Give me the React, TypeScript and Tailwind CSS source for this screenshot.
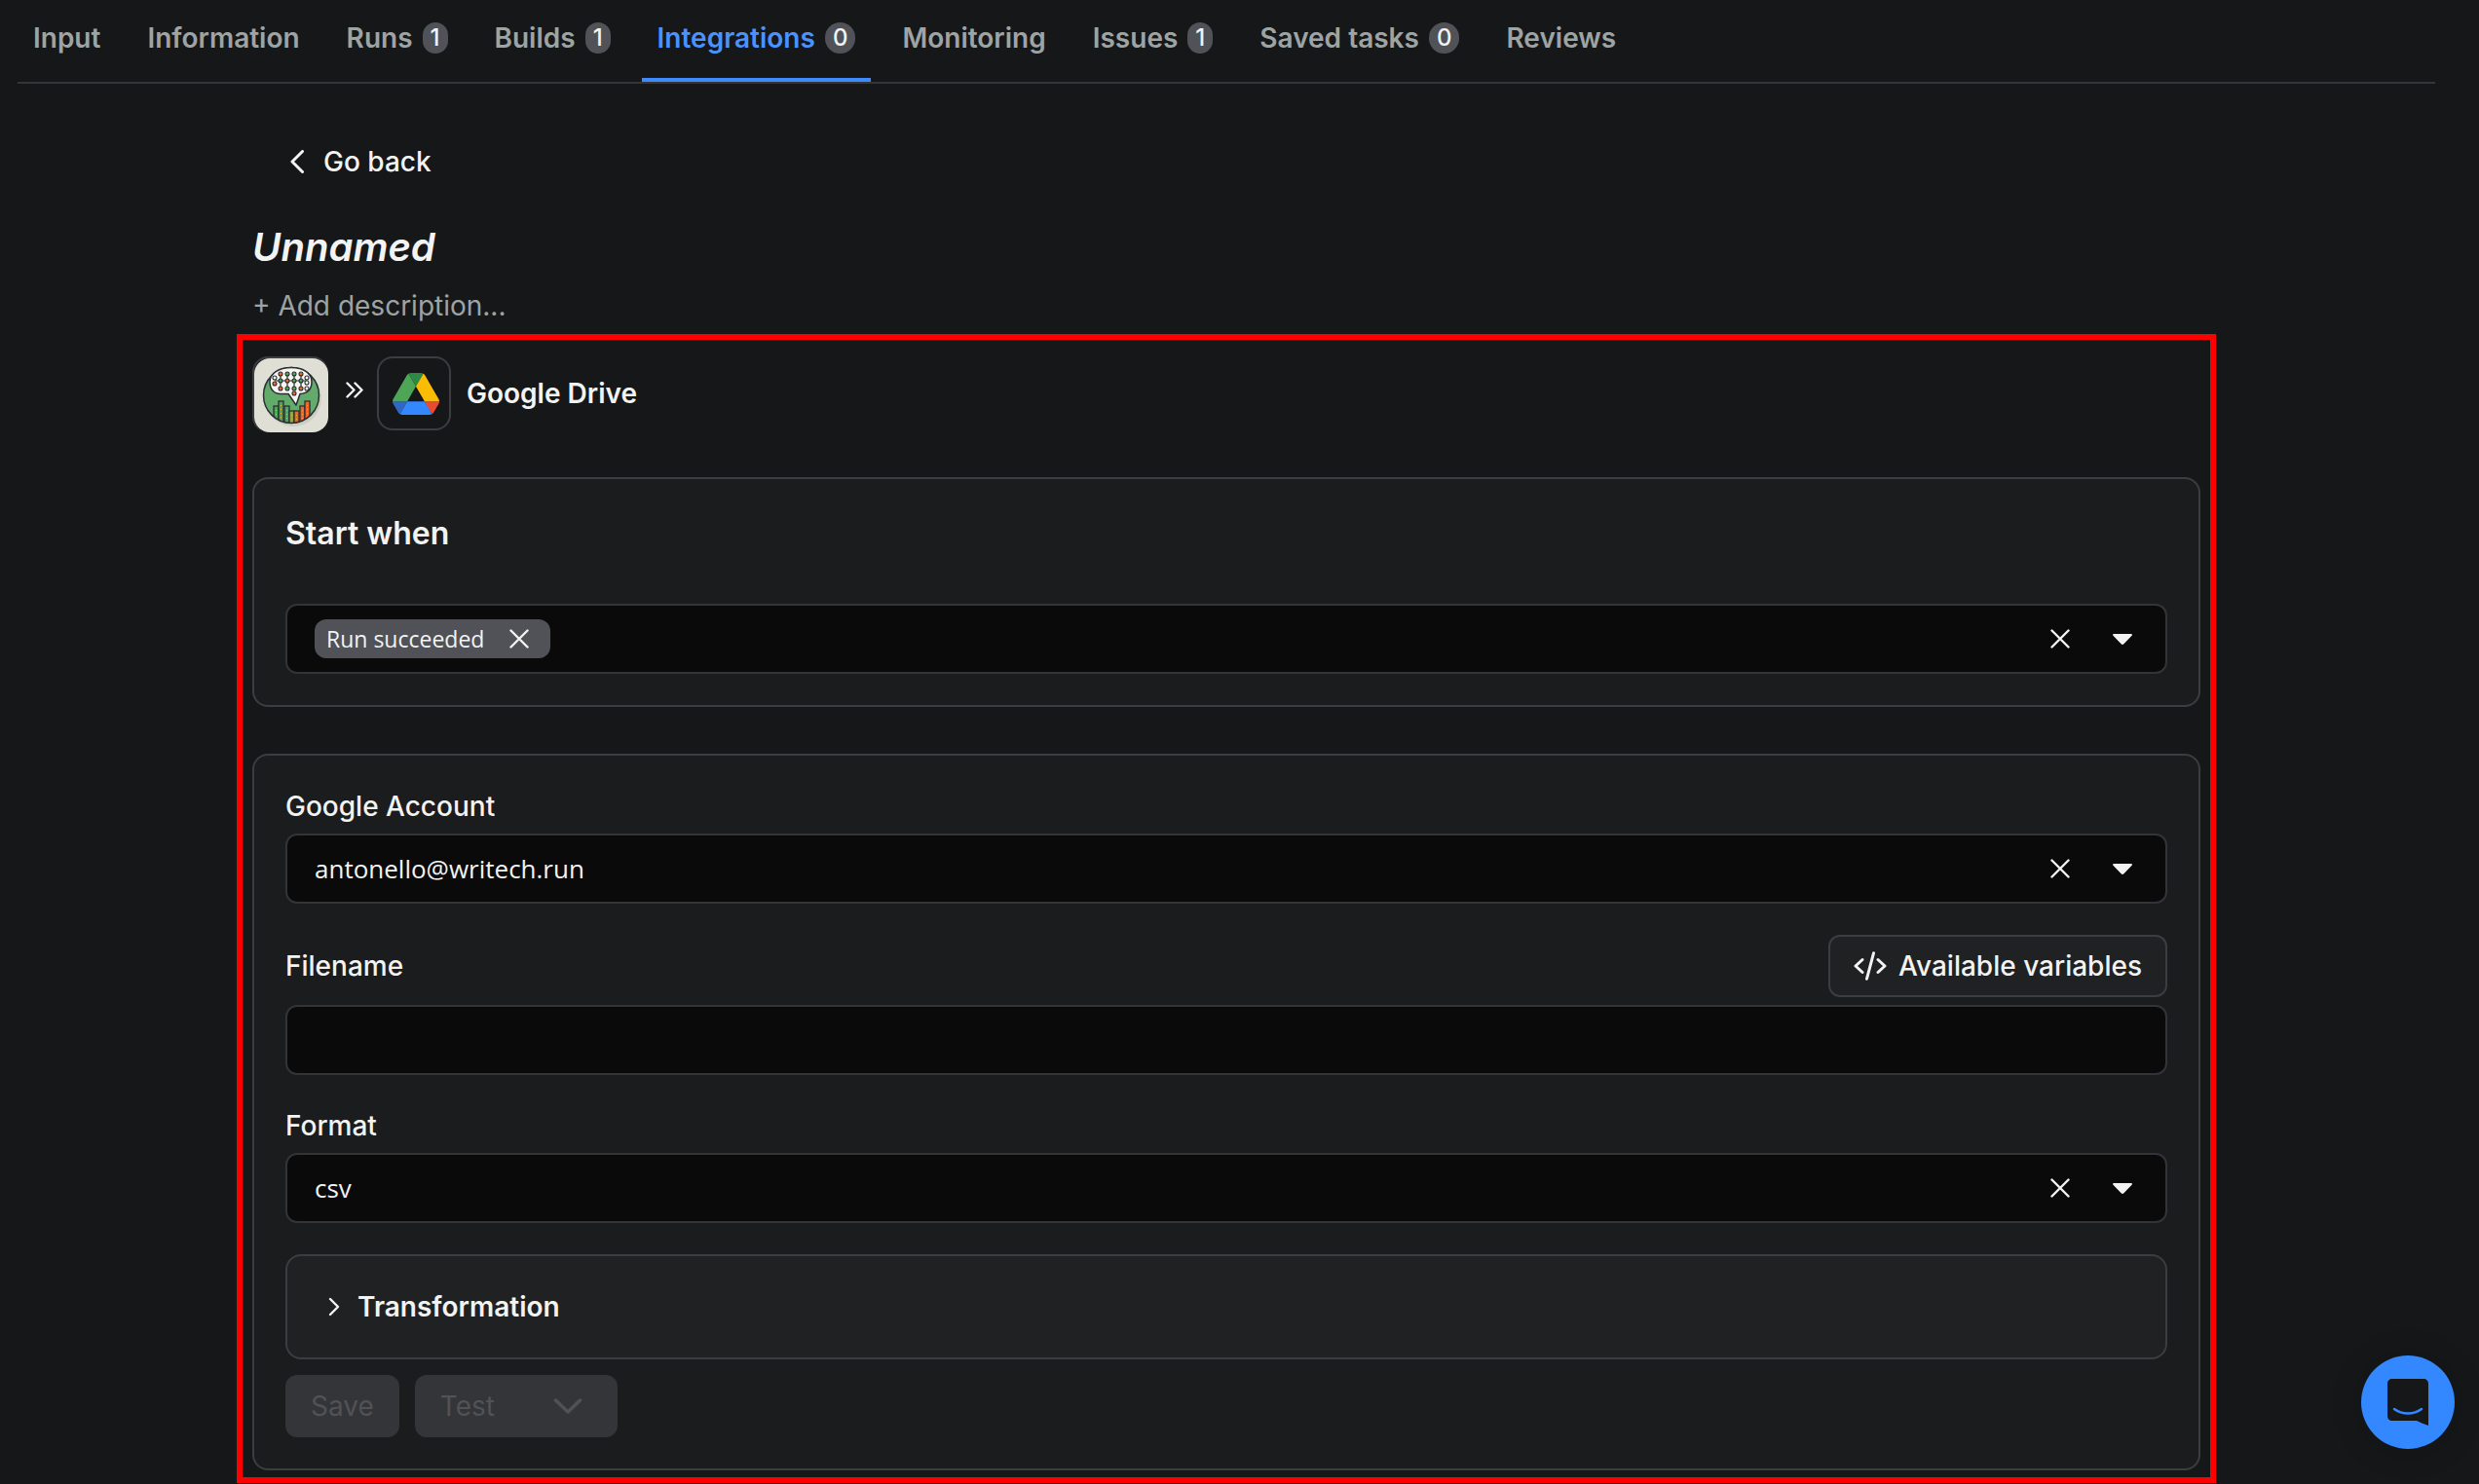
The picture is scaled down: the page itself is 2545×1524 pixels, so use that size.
import React from "react";

type Tab = { label: string; count?: number; active?: boolean };

const tabs: Tab[] = [
  { label: "Input" },
  { label: "Information" },
  { label: "Runs", count: 1 },
  { label: "Builds", count: 1 },
  { label: "Integrations", count: 0, active: true },
  { label: "Monitoring" },
  { label: "Issues", count: 1 },
  { label: "Saved tasks", count: 0 },
  { label: "Reviews" },
];

function Cross() {
  return (
    <svg className="size-5" viewBox="0 0 20 20" fill="none" stroke="currentColor" strokeWidth="2.4" strokeLinecap="round" aria-hidden="true">
      <path d="M1.5 1.5 18.5 18.5M18.5 1.5 1.5 18.5" />
    </svg>
  );
}

function Caret() {
  return (
    <svg className="h-[11px] w-5" viewBox="0 0 20 11" fill="currentColor" aria-hidden="true">
      <path d="M1.2 0h17.6c1 0 1.5 1 .8 1.7l-8.2 8.6c-.8.8-2 .8-2.8 0L.4 1.7C-.3 1 .2 0 1.2 0Z" />
    </svg>
  );
}

function AppLogo() {
  const nodes: [number, number, string][] = [
    [21, 20, "#fff"], [27, 16, "#f26522"], [34, 16, "#4fa45b"], [41, 16, "#4fa45b"], [48, 16, "#f26522"], [54, 20, "#fff"],
    [21, 26, "#f26522"], [27, 23, "#4fa45b"], [34, 23, "#f26522"], [41, 23, "#4fa45b"], [48, 23, "#4fa45b"], [54, 25, "#fff"],
    [27, 31, "#f26522"], [34, 31, "#4fa45b"], [41, 31, "#4fa45b"], [48, 31, "#f26522"], [54, 31, "#fff"], [41, 36, "#f26522"],
  ];
  const bars: [number, number, string][] = [
    [20, 49, "#4fa45b"], [25, 44, "#4fa45b"], [31, 49, "#4fa45b"], [36, 54, "#8da53a"],
    [41, 54, "#f26522"], [47, 49, "#f26522"], [52, 44, "#f26522"],
  ];
  return (
    <svg className="size-[76px] rounded-2xl" viewBox="0 0 76 76" role="img" aria-label="Actor logo">
      <defs>
        <clipPath id="disc"><circle cx="38" cy="38" r="28.5" /></clipPath>
      </defs>
      <rect width="76" height="76" fill="#e0dfd6" />
      <circle cx="40" cy="41" r="29" fill="#cccdc3" />
      <circle cx="38" cy="38" r="28.5" fill="#62ab6b" />
      <g clipPath="url(#disc)" stroke="#2b2f33" strokeWidth="1.3">
        {bars.map(([x, y, fill]) => <rect key={x} x={x} y={y} width="5" height="30" fill={fill} />)}
        {bars.map(([x, y]) => <path key={x} d={`M${x + 2.5} ${y + 4}v20`} stroke="#e9b52b" strokeWidth="1" strokeDasharray="1 3" />)}
      </g>
      <circle cx="38" cy="38" r="28.500" fill="none" stroke="#2b2f33" strokeWidth="1.5" />
      <path d="M38 9.500c13 0 21 6 21 14.500 0 8-4 12-12 12.500l-4 11.500-8-11.500H27c-7 0-11-5-11-12.500C16 15.500 25 9.500 38 9.500Z" fill="#f6f5f1" stroke="#2b2f33" strokeWidth="1.5" strokeLinejoin="round" />
      <path d="M21 23h33M27 16v15M34 16v15M41 16v15M48 16v15" stroke="#2b2f33" strokeWidth="1.2" />
      {nodes.map(([x, y, fill]) => <circle key={`${x}-${y}`} cx={x} cy={y} r="2" fill={fill} stroke="#2b2f33" strokeWidth="1.1" />)}
    </svg>
  );
}

function DriveLogo() {
  return (
    <svg className="h-[43px] w-12" viewBox="0 0 87.3 78" role="img" aria-label="Google Drive logo">
      <path d="m6.6 66.85 3.85 6.65c.8 1.4 1.95 2.5 3.3 3.3L27.5 53H0c0 1.55.4 3.1 1.2 4.5Z" fill="#2f68c4" />
      <path d="M43.65 25 29.9 1.2c-1.35.8-2.5 1.9-3.3 3.3L1.2 48.5C.4 49.9 0 51.45 0 53h27.5Z" fill="#4da656" />
      <path d="M73.55 76.8c1.35-.8 2.5-1.9 3.3-3.3l1.6-2.75 7.65-13.25c.8-1.4 1.2-2.95 1.2-4.5H59.8l5.85 11.5Z" fill="#ea4a2d" />
      <path d="M43.65 25 57.4 1.2C56.05.4 54.5 0 52.9 0H34.4c-1.6 0-3.15.45-4.5 1.2Z" fill="#2c8a45" />
      <path d="M59.8 53H27.5L13.75 76.8c1.35.8 2.9 1.2 4.5 1.2h50.8c1.6 0 3.15-.45 4.5-1.2Z" fill="#3388ff" />
      <path d="M73.4 26.5 60.7 4.5c-.8-1.4-1.95-2.5-3.3-3.3L43.65 25 59.8 53h27.45c0-1.55-.4-3.1-1.2-4.5Z" fill="#fbbc04" />
    </svg>
  );
}

const fieldBox = "flex h-[72px] items-center rounded-xl border-2 border-[#323438] bg-[#0a0a0a] pl-7 pr-[34px]";
const card = "rounded-2xl border-2 border-[#3b3d40] bg-[#1b1c1e] px-8 pb-8";

function SelectField({ id, label, value }: { id: string; label: string; value: string }) {
  return (
    <div className={fieldBox}>
      <select id={id} defaultValue={value} className="h-full min-w-0 flex-1 appearance-none bg-transparent font-['Open_Sans','Noto_Sans',sans-serif] text-[26px] outline-none">
        <option value={value}>{value}</option>
      </select>
      <button type="button" aria-label={`Clear ${label}`} className="mr-11"><Cross /></button>
      <Caret />
    </div>
  );
}

export default function App() {
  return (
    <div className="min-h-screen bg-[#161719] pl-[18px] pr-[45px] font-['Inter',sans-serif] text-[28px] leading-8 text-[#f2f3f2]">
      <nav className="flex gap-4 border-b-2 border-[#343539]" aria-label="Actor sections">
        {tabs.map((t) => (
          <a
            key={t.label}
            href="#"
            aria-current={t.active ? "page" : undefined}
            className={`flex h-[84px] items-center gap-[10px] whitespace-nowrap border-b-4 px-4 pb-0.5 font-semibold ${t.active ? "border-[#3d8bff] text-[#4a93ff]" : "border-transparent text-[#9ea3a3]"}`}
          >
            {t.label}
            {t.count !== undefined && (
              <span className="h-8 rounded-full bg-[#505257] px-2 text-2xl font-medium leading-8 text-[#f2f3f2]">{t.count}</span>
            )}
          </a>
        ))}
      </nav>

      <main className="mx-auto max-w-[2032px] pt-12">
        <header className="px-4">
          <button type="button" className="flex h-16 items-center gap-5 pl-[39px] font-medium">
            <svg className="h-6 w-[14px]" viewBox="0 0 14 24" fill="none" stroke="currentColor" strokeWidth="3" strokeLinecap="round" strokeLinejoin="round" aria-hidden="true">
              <path d="M12.5 1.5 2 12l10.5 10.5" />
            </svg>
            Go back
          </button>
          <h1 className="mt-8 text-[40px] font-semibold italic leading-[48px]">Unnamed</h1>
          <button type="button" className="mt-5 block text-[#9ea3a3]">+ Add description...</button>
        </header>

        <section className="mt-[13px] border-[6px] border-[#ff0000] px-[10px] pb-[7px] pt-[17px]">
          <div className="flex items-start">
            <div className="size-[78px] rounded-2xl border-l-2 border-t-2 border-[#3b3d40]">
              <AppLogo />
            </div>
            <svg className="ml-[18px] mt-[26px] h-[17px] w-[18px]" viewBox="0 0 18 17" fill="none" stroke="currentColor" strokeWidth="2.4" strokeLinecap="round" strokeLinejoin="round" aria-hidden="true">
              <path d="m1.5 1.5 7 7-7 7M9.5 1.5l7 7-7 7" />
            </svg>
            <div className="ml-[14px] flex h-[76px] w-[76px] items-center justify-center rounded-2xl border-2 border-[#3b3d40] pl-1">
              <DriveLogo />
            </div>
            <h2 className="ml-4 mt-[22px] font-semibold">Google Drive</h2>
          </div>

          <div className={`${card} mt-[46px] pt-9`}>
            <h3 className="text-[32px] font-semibold leading-10">Start when</h3>
            <div className={`${fieldBox} mt-[52px]`}>
              <span className="flex h-10 items-center gap-[26px] rounded-xl bg-[#505257] pl-3 pr-[22px] font-['Open_Sans','Noto_Sans',sans-serif] text-[23px]">
                Run succeeded
                <button type="button" aria-label="Remove Run succeeded"><Cross /></button>
              </span>
              <input aria-label="Start when" className="min-w-0 flex-1 bg-transparent outline-none" />
              <button type="button" aria-label="Clear events" className="mr-11"><Cross /></button>
              <button type="button" aria-label="Show events"><Caret /></button>
            </div>
          </div>

          <form className={`${card} mt-12 pt-9`}>
            <label htmlFor="account" className="mb-3 block font-medium">Google Account</label>
            <SelectField id="account" label="Google Account" value="antonello@writech.run" />

            <div className="mb-2 mt-8 flex items-center justify-between">
              <label htmlFor="filename" className="font-medium">Filename</label>
              <button type="button" className="flex h-16 items-center gap-3 rounded-xl border-2 border-[#3b3d40] bg-[#202123] px-6 font-medium">
                <svg className="h-[30px] w-[34px]" viewBox="0 0 34 30" fill="none" stroke="currentColor" strokeWidth="3" strokeLinecap="round" strokeLinejoin="round" aria-hidden="true">
                  <path d="M9 8.5 2 15l7 6.5M25 8.5 32 15l-7 6.5M20.5 1.8l-7 26.4" />
                </svg>
                Available variables
              </button>
            </div>
            <input id="filename" type="text" className="block h-[72px] w-full rounded-xl border-2 border-[#323438] bg-[#0a0a0a] px-7 outline-none" />

            <label htmlFor="format" className="mb-3 mt-9 block font-medium">Format</label>
            <SelectField id="format" label="Format" value="csv" />

            <button type="button" aria-expanded="false" className="mt-8 flex h-[108px] w-full items-center gap-[18px] rounded-2xl border-2 border-[#3b3d40] bg-[#202123] pl-[42px] font-semibold">
              <svg className="h-5 w-3" viewBox="0 0 12 20" fill="none" stroke="currentColor" strokeWidth="2.4" strokeLinecap="round" strokeLinejoin="round" aria-hidden="true">
                <path d="m2 2 8 8-8 8" />
              </svg>
              Transformation
            </button>

            <div className="mt-4 flex gap-4 text-[#505257]">
              <button type="submit" disabled className="h-16 rounded-xl bg-[#343539] px-[26px]">Save</button>
              <button type="button" disabled className="flex h-16 items-center gap-[60px] rounded-xl bg-[#343539] px-[26px] pr-9">
                Test
                <svg className="h-4 w-[30px]" viewBox="0 0 30 16" fill="none" stroke="currentColor" strokeWidth="3.5" strokeLinecap="round" strokeLinejoin="round" aria-hidden="true">
                  <path d="m2.5 2 12.5 12L27.5 2" />
                </svg>
              </button>
            </div>
          </form>
        </section>
      </main>

      <button type="button" aria-label="Open chat" className="fixed bottom-9 right-[25px] flex size-24 items-center justify-center rounded-full bg-[#3388ff] shadow-[0_2px_32px_#0003]">
        <svg className="h-12 w-[42px]" viewBox="0 0 42 48" aria-hidden="true">
          <path d="M5 0h32c3 0 5 2 5 5v43c-4-1.5-8-3-12-5H5c-3 0-5-2-5-5V5c0-3 2-5 5-5Z" fill="#161719" />
          <path d="M7 31c8 6 20 6 28 0" fill="none" stroke="#3388ff" strokeWidth="2.6" strokeLinecap="round" />
        </svg>
      </button>
    </div>
  );
}
